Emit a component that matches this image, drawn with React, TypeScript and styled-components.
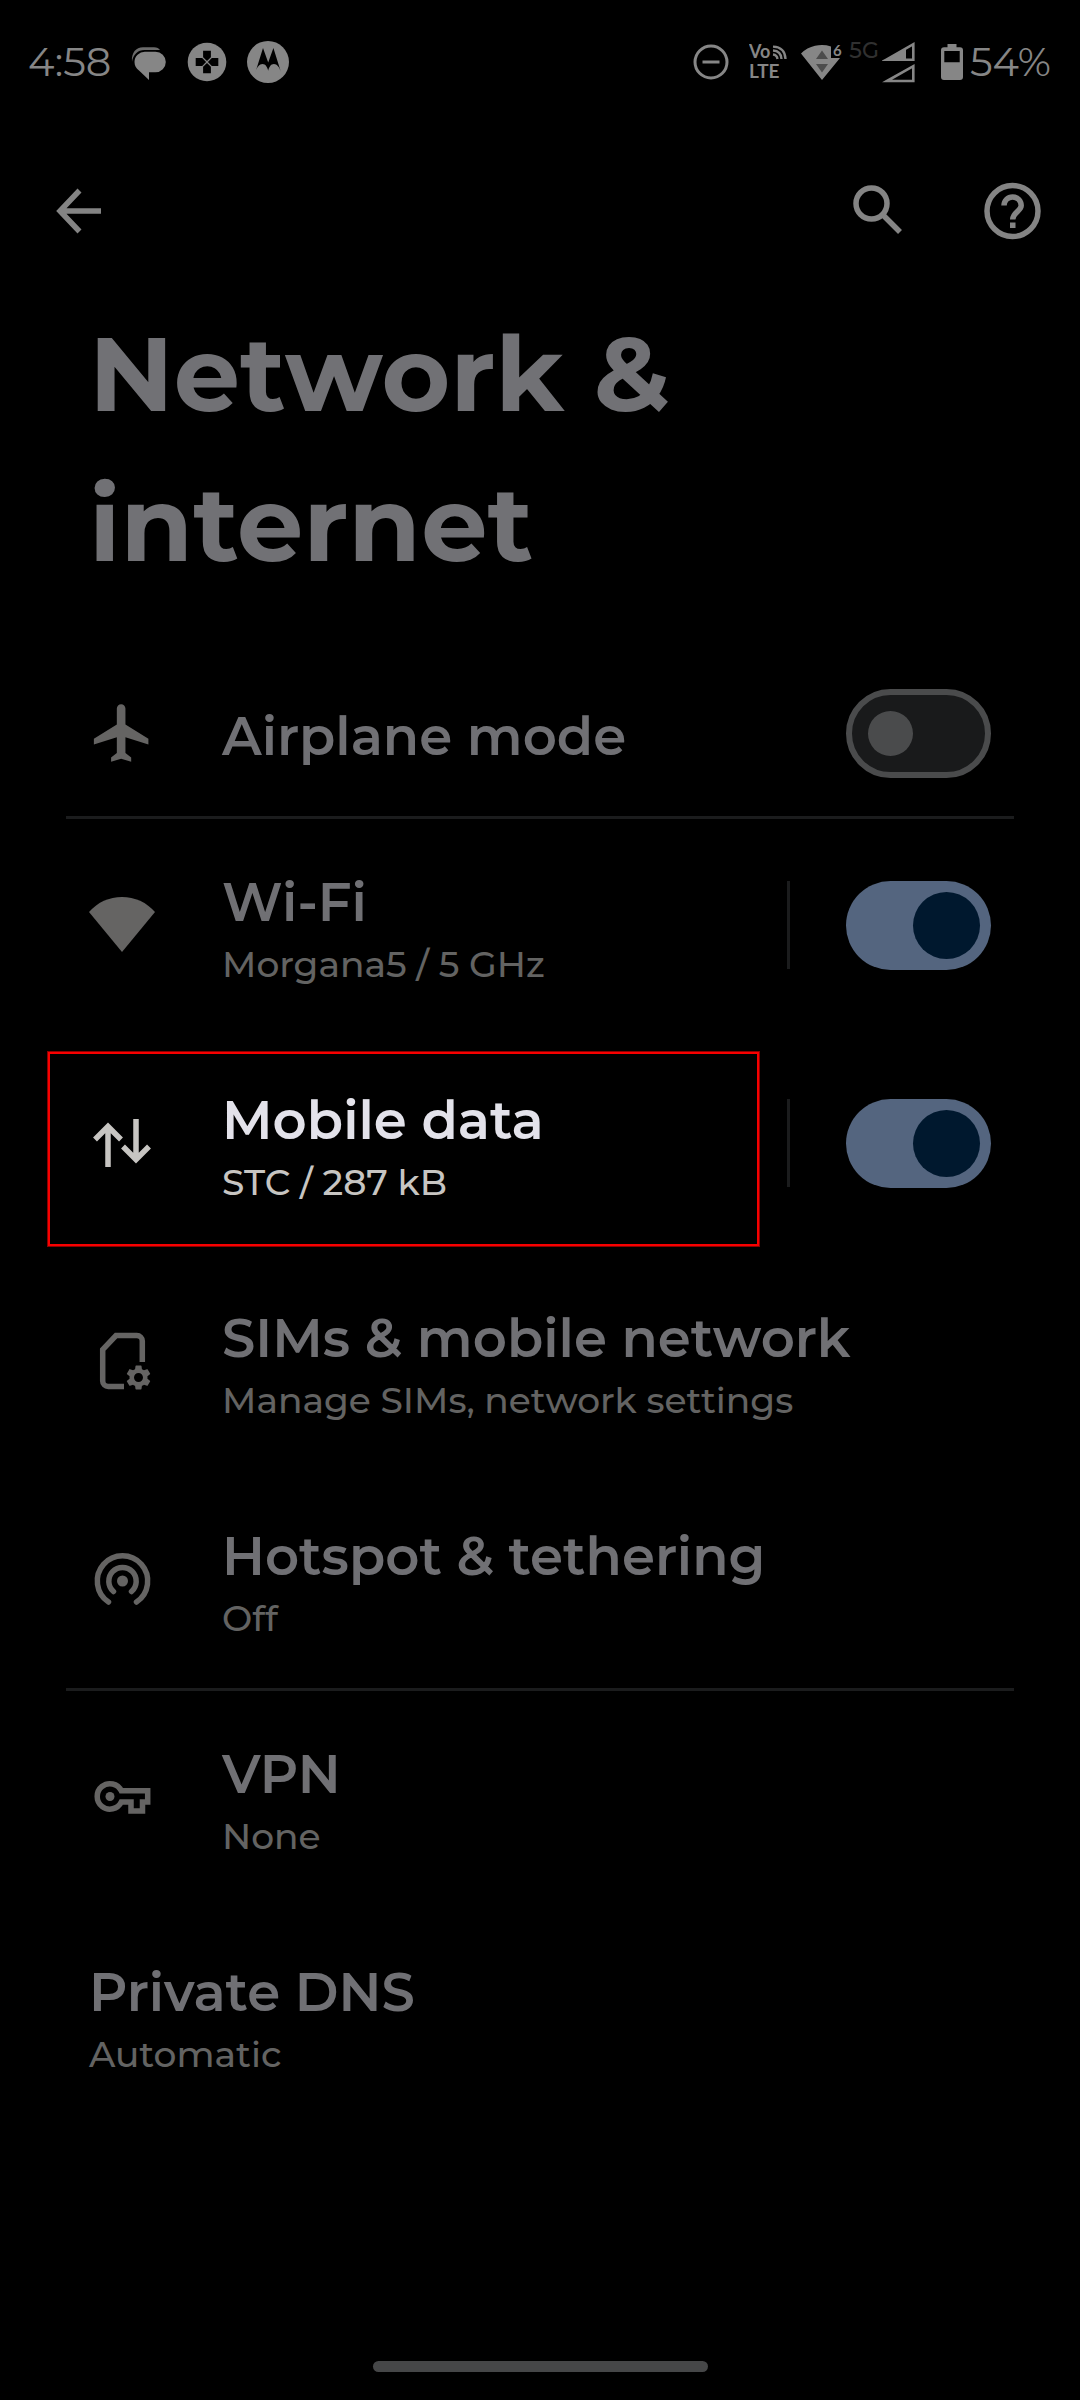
import React, { useState } from "react";
import styled, { createGlobalStyle, css } from "styled-components";

const color = {
  page: "#000000",
  status: "#868686",
  toolbar: "#848484",
  heading: "#717175",
  title: "#707074",
  summary: "#636362",
  icon: "#656463",
  line: "#1b1c1d",
  brightTitle: "#e3e2ea",
  brightSummary: "#c7c5c2",
  accent: "#54657f",
  accentDark: "#00182e",
};

const GlobalStyle = createGlobalStyle`
  * { box-sizing: border-box; }
  body {
    margin: 0;
    background: ${color.page};
    font-family: Montserrat, Inter, "Open Sans", sans-serif;
  }
  button {
    margin: 0;
    padding: 0;
    border: 0;
    background: none;
    color: inherit;
    font: inherit;
    text-align: left;
    cursor: pointer;
  }
  svg { display: block; flex: none; }
`;

const Screen = styled.div`
  display: flex;
  flex-direction: column;
  min-height: 100vh;
  background: ${color.page};
`;

const StatusBar = styled.header`
  display: flex;
  align-items: center;
  justify-content: space-between;
  height: 124px;
  padding: 0 29px 0 28px;
  color: ${color.status};
`;

const StatusGroup = styled.div<{ $gap: number }>`
  display: flex;
  align-items: center;
  gap: ${(p) => p.$gap}px;
`;

const StatusText = styled.span`
  font-size: 40px;
  line-height: 46px;
`;

const NetworkType = styled.span`
  align-self: flex-start;
  color: #303030;
  font-size: 22px;
  font-weight: 500;
  line-height: 20px;
`;

const Toolbar = styled.nav`
  display: flex;
  align-items: center;
  gap: 68px;
  padding: 54px 35px 54px 45px;
  color: ${color.toolbar};
`;

const ToolbarButton = styled.button<{ $leading?: boolean }>`
  ${(p) => p.$leading && css`margin-right: auto;`}
`;

const Heading = styled.h1`
  max-width: 800px;
  margin: 0;
  padding: 0 89px;
  color: ${color.heading};
  font-size: 105px;
  font-weight: 700;
  line-height: 150px;
`;

const List = styled.main`
  margin: 52px 66px 0;
`;

const Row = styled.section<{ $divided?: boolean; $compact?: boolean }>`
  display: flex;
  align-items: center;
  min-height: ${(p) => (p.$compact ? 166 : 218)}px;
  padding: 0 23px;
  ${(p) => p.$divided && css`box-shadow: inset 0 3px ${color.line};`}
`;

const rowBody = css`
  display: flex;
  flex: 1;
  align-items: center;
  align-self: stretch;
  gap: 67px;
  color: ${color.icon};
`;

const RowButton = styled.button<{ $highlighted?: boolean }>`
  ${rowBody}
  ${(p) =>
    p.$highlighted &&
    css`
      position: relative;
      color: ${color.brightSummary};
      &::after {
        content: "";
        position: absolute;
        inset: 18px 1px 6px -41px;
        border: 2px solid #f80000;
        box-shadow: 0 0 0 1px #8a0000;
      }
    `}
`;

const RowLabel = styled.label`
  ${rowBody}
`;

const RowText = styled.span`
  display: flex;
  flex-direction: column;
  gap: 6px;
  padding-top: 6px;
`;

const Title = styled.span<{ $bright?: boolean }>`
  color: ${(p) => (p.$bright ? color.brightTitle : color.title)};
  font-size: 53px;
  font-weight: 600;
  line-height: 66px;
`;

const Summary = styled.span<{ $bright?: boolean }>`
  color: ${(p) => (p.$bright ? color.brightSummary : color.summary)};
  font-size: 36px;
  font-weight: 500;
  line-height: 46px;
`;

const Separator = styled.span`
  width: 3px;
  height: 88px;
  margin: 0 56px 0 27px;
  background: ${color.line};
`;

const Switch = styled.input`
  display: flex;
  flex: none;
  align-items: center;
  appearance: none;
  width: 145px;
  height: 89px;
  margin: 0;
  padding: 0 16px;
  border: 6px solid #4a4b4c;
  border-radius: 45px;
  background: #191a1b;
  cursor: pointer;

  &::before {
    content: "";
    width: 45px;
    height: 45px;
    border-radius: 50%;
    background: #4a4b4c;
  }

  &:checked {
    justify-content: flex-end;
    padding: 0 11px;
    border: 0;
    background: ${color.accent};
  }

  &:checked::before {
    width: 67px;
    height: 67px;
    background: ${color.accentDark};
  }
`;

const HomeArea = styled.footer`
  display: flex;
  justify-content: center;
  margin-top: auto;
  padding: 28px 0;
`;

const HomeHandle = styled.span`
  width: 335px;
  height: 11px;
  border-radius: 6px;
  background: #464748;
`;

const MessagesIcon = () => (
  <svg width="36" height="36" viewBox="0 0 36 36" fill="currentColor" aria-hidden="true">
    <path d="M1 18C.2 8.500 5 3.300 12 3.300h11c3 0 5 1.200 6 2.700H13.500C7 6 2 10.500 1 18z" opacity=".8" />
    <path d="M14 7.700h10.500a10.300 10.300 0 0 1 0 20.600H18V36l-10-9.500c-3-2-4.500-5-4.500-8.500A10.300 10.300 0 0 1 14 7.700z" />
  </svg>
);

const GamepadIcon = () => (
  <svg width="40" height="40" viewBox="-20 -20 40 40" aria-hidden="true">
    <circle r="19.300" fill="currentColor" />
    {[0, 90, 180, 270].map((angle) => (
      <path key={angle} d="M-3.900-11.300h7.800v6.500L0-.9l-3.900-3.900z" transform={`rotate(${angle})`} />
    ))}
  </svg>
);

const MotorolaIcon = () => (
  <svg width="42" height="42" viewBox="0 0 42 42" aria-hidden="true">
    <circle cx="21" cy="21" r="21" fill="currentColor" />
    <path d="M8.500 31 16 7l5.200 14.500L26.400 7l7.500 24c-1.400-4.800-3.900-8-7-8s-4.700 2.800-5.700 6.800c-1-4-2.600-6.800-5.700-6.800s-5.600 3.200-7 8z" />
  </svg>
);

const DoNotDisturbIcon = () => (
  <svg width="36" height="36" viewBox="0 0 36 36" fill="none" stroke="currentColor" strokeWidth="3" aria-hidden="true">
    <circle cx="18" cy="18" r="16" />
    <path d="M9.500 18h17" />
  </svg>
);

const VolteIcon = () => (
  <svg width="38" height="52" viewBox="0 -8 38 52" fill="currentColor" aria-label="VoLTE">
    <g fontFamily="Lato, sans-serif" fontWeight="700">
      <text x="0" y="14" fontSize="18">Vo</text>
      <text x="0" y="33.500" fontSize="19">LTE</text>
    </g>
    <g fill="none" stroke="currentColor" strokeWidth="2.400">
      <path d="M24 10.500q4 .5 4.500 4.500M24 6.500q8 .5 8.500 8.500M24 2.600q12 .5 12.500 12.400" />
    </g>
  </svg>
);

const WifiStatusIcon = () => (
  <svg width="44" height="48" viewBox="0 -6 44 48" fill="currentColor" aria-hidden="true">
    <path d="M0 9.500A30 30 0 0 1 30 2.500V14h9L21 36z" />
    <path d="M21 6.500 27 15H15zM15 20h12l-6 8.500z" fill="#4c4c4c" />
    <text x="32" y="12" fontSize="15" fontWeight="700" fontFamily="Lato, sans-serif">6</text>
  </svg>
);

const SignalIcon = () => (
  <svg width="33" height="42" viewBox="0 0 33 42" aria-hidden="true">
    <path d="M4 18.800 31.300 3.200v15.600z" fill="none" stroke="currentColor" strokeWidth="2.600" />
    <path d="M3 19.500 24 7v12.500z" fill="currentColor" />
    <path d="M5 40 31.300 25.200V40z" fill="none" stroke="currentColor" strokeWidth="2.600" />
  </svg>
);

const BatteryIcon = () => (
  <svg width="22" height="36" viewBox="0 0 22 36" fill="currentColor" fillRule="evenodd" aria-hidden="true">
    <path d="M6.500 0h9v3.300H19a3 3 0 0 1 3 3V33a3 3 0 0 1-3 3H3a3 3 0 0 1-3-3V6.300a3 3 0 0 1 3-3h3.500zM3.300 7v11.300h15.400V7z" />
  </svg>
);

const Glyph = ({ children }: { children: React.ReactNode }) => (
  <svg width="66" height="66" viewBox="0 0 66 66" fill="none" stroke="currentColor" strokeWidth="5.500" aria-hidden="true">
    {children}
  </svg>
);

const BackIcon = () => (
  <Glyph>
    <path d="M34.500 12.500 15 33l19.500 20.500M15 33h41" />
  </Glyph>
);

const SearchIcon = () => (
  <Glyph>
    <circle cx="26.500" cy="25.500" r="15.500" />
    <path d="m37 36 18 18" />
  </Glyph>
);

const HelpIcon = () => (
  <Glyph>
    <circle cx="33.500" cy="33" r="25.500" />
    <path d="M25 27.500a8.600 8.600 0 1 1 17.200 0c0 5.500-8.500 7-8.500 14" />
    <path d="M31 44.500h5.500v5.500H31z" fill="currentColor" stroke="none" />
  </Glyph>
);

const AirplaneIcon = () => (
  <svg width="66" height="66" viewBox="0.300 0.500 23 23" fill="currentColor" aria-hidden="true">
    <path d="M21 16v-2l-8-5V3.500c0-.83-.67-1.500-1.500-1.500S10 2.670 10 3.500V9l-8 5v2l8-2.500V19l-2 1.500V22l3.500-1 3.500 1v-1.500L13 19v-5.500l8 2.500z" />
  </svg>
);

const WifiIcon = () => (
  <Glyph>
    <path d="M0 20a43.600 43.600 0 0 1 66 0L33 60z" fill="currentColor" stroke="none" />
  </Glyph>
);

const MobileDataIcon = () => (
  <Glyph>
    <path d="M19 57V16M6 29.500 19 16.500l13 13M47 9v41M34 36.500l13 13 13-13" />
  </Glyph>
);

const SimIcon = () => (
  <Glyph>
    <path d="M53.300 34V13a5.500 5.500 0 0 0-5.500-5.500H27L13.700 21.500V53a5.500 5.500 0 0 0 5.500 5.500H35" />
    <path
      transform="translate(34.500 34.500) scale(1.250)"
      fill="currentColor"
      stroke="none"
      d="M19.140 12.940c.04-.3.060-.61.060-.94 0-.32-.02-.64-.07-.94l2.030-1.580c.18-.14.230-.41.120-.61l-1.920-3.320c-.12-.22-.37-.29-.59-.22l-2.390.96c-.5-.38-1.030-.7-1.620-.94l-.36-2.540c-.04-.24-.24-.41-.48-.41h-3.840c-.24 0-.43.170-.47.410l-.36 2.540c-.59.240-1.130.570-1.620.940l-2.390-.96c-.22-.08-.47 0-.59.220L2.740 8.870c-.12.210-.08.470.120.610l2.030 1.580c-.05.300-.09.630-.09.940s.02.640.070.940l-2.030 1.580c-.18.140-.23.410-.12.610l1.920 3.320c.12.220.370.290.590.220l2.390-.96c.5.380 1.030.700 1.620.940l.36 2.540c.05.240.240.410.480.410h3.840c.24 0 .44-.17.470-.41l.36-2.540c.59-.24 1.130-.56 1.620-.94l2.390.96c.22.080.470 0 .590-.22l1.920-3.320c.12-.22.070-.47-.12-.61l-2.010-1.580zM12 15.600c-1.980 0-3.600-1.620-3.600-3.600s1.620-3.600 3.600-3.600 3.600 1.620 3.600 3.600-1.620 3.600-3.600 3.600z"
    />
  </Glyph>
);

const HotspotIcon = () => (
  <Glyph>
    <circle cx="33.500" cy="35" r="5.500" fill="currentColor" stroke="none" />
    <path d="M24.500 45.500a13.700 13.700 0 1 1 18 0M19.500 56a25.200 25.200 0 1 1 28 0" strokeLinecap="round" />
  </Glyph>
);

const KeyIcon = () => (
  <Glyph>
    <path d="M32.300 26.800h26.400V38h-5.200v9H42v-9h-9.700a12.700 12.700 0 1 1 0-11.200z" />
    <circle cx="21" cy="32.500" r="4.500" fill="currentColor" stroke="none" />
  </Glyph>
);

type EntryProps = {
  icon?: React.ReactNode;
  title: string;
  summary: string;
  divided?: boolean;
  highlighted?: boolean;
  toggle?: { checked: boolean; onChange: (on: boolean) => void };
};

const Entry = ({ icon, title, summary, divided, highlighted, toggle }: EntryProps) => (
  <Row $divided={divided}>
    <RowButton type="button" $highlighted={highlighted}>
      {icon}
      <RowText>
        <Title $bright={highlighted}>{title}</Title>
        <Summary $bright={highlighted}>{summary}</Summary>
      </RowText>
    </RowButton>
    {toggle && (
      <>
        <Separator />
        <Switch
          type="checkbox"
          role="switch"
          aria-label={title}
          checked={toggle.checked}
          onChange={(e) => toggle.onChange(e.target.checked)}
        />
      </>
    )}
  </Row>
);

export default function App() {
  const [airplane, setAirplane] = useState(false);
  const [wifi, setWifi] = useState(true);
  const [mobile, setMobile] = useState(true);

  return (
    <>
      <GlobalStyle />
      <Screen>
        <StatusBar>
          <StatusGroup $gap={20}>
            <StatusText>4:58</StatusText>
            <MessagesIcon />
            <GamepadIcon />
            <MotorolaIcon />
          </StatusGroup>
          <StatusGroup $gap={26}>
            <StatusGroup $gap={20}>
              <DoNotDisturbIcon />
              <StatusGroup $gap={14}>
                <VolteIcon />
                <StatusGroup $gap={4}>
                  <WifiStatusIcon />
                  <StatusGroup $gap={3}>
                    <NetworkType>5G</NetworkType>
                    <SignalIcon />
                  </StatusGroup>
                </StatusGroup>
              </StatusGroup>
            </StatusGroup>
            <StatusGroup $gap={7}>
              <BatteryIcon />
              <StatusText>54%</StatusText>
            </StatusGroup>
          </StatusGroup>
        </StatusBar>

        <Toolbar>
          <ToolbarButton type="button" aria-label="Back" $leading>
            <BackIcon />
          </ToolbarButton>
          <ToolbarButton type="button" aria-label="Search">
            <SearchIcon />
          </ToolbarButton>
          <ToolbarButton type="button" aria-label="Help">
            <HelpIcon />
          </ToolbarButton>
        </Toolbar>

        <Heading>Network &amp; internet</Heading>

        <List>
          <Row $compact>
            <RowLabel htmlFor="airplane">
              <AirplaneIcon />
              <RowText>
                <Title>Airplane mode</Title>
              </RowText>
            </RowLabel>
            <Switch
              id="airplane"
              type="checkbox"
              role="switch"
              checked={airplane}
              onChange={(e) => setAirplane(e.target.checked)}
            />
          </Row>
          <Entry
            divided
            icon={<WifiIcon />}
            title="Wi-Fi"
            summary="Morgana5 / 5 GHz"
            toggle={{ checked: wifi, onChange: setWifi }}
          />
          <Entry
            highlighted
            icon={<MobileDataIcon />}
            title="Mobile data"
            summary="STC / 287 kB"
            toggle={{ checked: mobile, onChange: setMobile }}
          />
          <Entry icon={<SimIcon />} title="SIMs & mobile network" summary="Manage SIMs, network settings" />
          <Entry icon={<HotspotIcon />} title="Hotspot & tethering" summary="Off" />
          <Entry divided icon={<KeyIcon />} title="VPN" summary="None" />
          <Entry title="Private DNS" summary="Automatic" />
        </List>

        <HomeArea>
          <HomeHandle />
        </HomeArea>
      </Screen>
    </>
  );
}
